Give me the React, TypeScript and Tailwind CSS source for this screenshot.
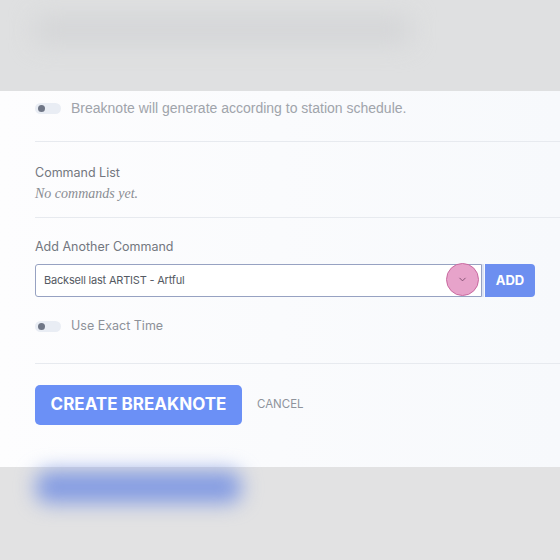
import { ChevronDown } from "lucide-react";

function Toggle() {
  return (
    <div className="flex h-[11px] w-[26px] shrink-0 items-center rounded-full bg-[#e9edf4] px-[3px]">
      <div className="h-[7px] w-[7px] rounded-full bg-[#6f7686]" />
    </div>
  );
}

export default function App() {
  return (
    <div className="flex h-[560px] w-[560px] flex-col overflow-hidden bg-[#e2e2e3] font-['Inter',sans-serif]">
      {/* blurred header behind the modal */}
      <div className="h-[91px] shrink-0 bg-[#dfe0e1] px-[35px] pt-[16px]">
        <div className="h-[28px] w-[375px] rounded-md bg-[#d4d5d7] blur-md" />
      </div>

      {/* modal body */}
      <div className="flex h-[376px] shrink-0 flex-col bg-gradient-to-r from-[#fdfdfe] to-[#f7f9fc] pl-[35px]">
        <div className="flex items-center gap-[10px] pt-[7px] pb-[23px]">
          <Toggle />
          <span className="font-['Liberation_Sans',sans-serif] text-[14px] leading-[20px] text-[#a0a4ab]">
            Breaknote will generate according to station schedule.
          </span>
        </div>
        <div className="h-px bg-[#e7eaef]" />

        <div className="flex flex-col pt-[22px] pb-[14px]">
          <span className="text-[12.5px] leading-[18px] text-[#73777f]">Command List</span>
          <span className="mt-[3px] font-['Liberation_Serif',serif] text-[14px] italic leading-[18px] text-[#8a8d93]">
            No commands yet.
          </span>
        </div>
        <div className="h-px bg-[#e7eaef]" />

        <div className="flex flex-col pt-[20px] pr-[25px]">
          <span className="text-[12.5px] leading-[18px] text-[#73777f]">Add Another Command</span>
          <div className="mt-[8px] flex items-stretch">
            <div className="relative flex h-[33px] flex-1 items-center rounded-l-[3px] border border-[#97a2c2] bg-white pl-[8px]">
              <span className="text-[11px] tracking-[-0.2px] text-[#555a63]">Backsell last ARTIST - Artful</span>
              <div className="absolute right-[2px] top-[-2px] flex h-[33px] w-[33px] items-center justify-center rounded-full border border-[#c96aa0] bg-[#e7a3ca]">
                <ChevronDown size={11} strokeWidth={2} className="text-[#7d4a6c]" />
              </div>
              <div className="absolute right-[-3px] top-[-1px] h-[33px] w-[2px] bg-[#dde3f3]" />
            </div>
            <button className="ml-[3px] flex h-[33px] w-[50px] items-center justify-center rounded-r-[4px] bg-[#6d8ff0] text-[13px] font-bold text-white">
              ADD
            </button>
          </div>
          <div className="flex items-center gap-[10px] pt-[20px]">
            <Toggle />
            <span className="text-[12.5px] leading-[18px] text-[#8d9199]">Use Exact Time</span>
          </div>
        </div>
        <div className="mt-[28px] h-px bg-[#e7eaef]" />

        <div className="flex items-center gap-[15px] pt-[21px]">
          <button className="h-[40px] w-[207px] rounded-[5px] bg-[#6b90f6] text-[17px] font-bold text-white">
            CREATE BREAKNOTE
          </button>
          <span className="text-[11.5px] text-[#8e939c]">CANCEL</span>
        </div>
      </div>

      {/* blurred area below */}
      <div className="flex-1 px-[36px] pt-[4px]">
        <div className="h-[32px] w-[205px] rounded-xl bg-[#839be2] blur-[10px]" />
      </div>
    </div>
  );
}
